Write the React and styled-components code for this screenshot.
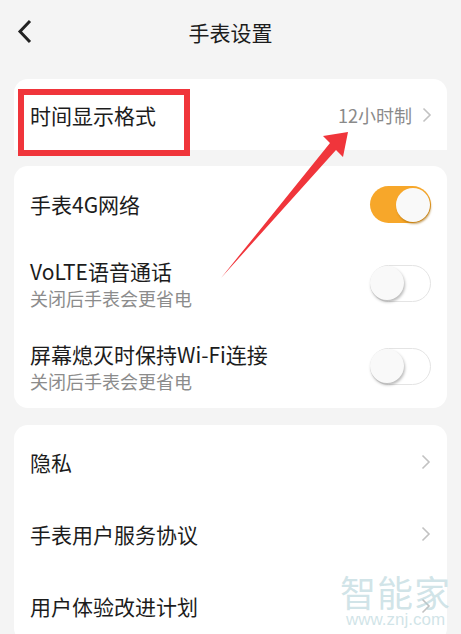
import React from "react";
import styled, { createGlobalStyle } from "styled-components";

const GlobalStyle = createGlobalStyle`
  html, body {
    margin: 0;
    padding: 0;
    background: #f4f4f4;
  }
  body {
    font-family: "Noto Sans CJK SC", "Noto Sans", "Liberation Sans", sans-serif;
    color: #1c1c1c;
  }
`;

const Page = styled.div`
  position: relative;
  width: 461px;
  height: 634px;
  overflow: hidden;
  background: #f4f4f4;
  padding: 0 14px;
  box-sizing: border-box;
  display: flex;
  flex-direction: column;
  & > * {
    flex-shrink: 0;
  }
`;

const Header = styled.div`
  height: 64px;
  display: flex;
  align-items: center;
  justify-content: center;
  position: relative;
  margin-bottom: 15px;
`;

const BackButton = styled.div`
  position: absolute;
  left: 2px;
  top: 19px;
  width: 20px;
  height: 26px;
`;

const Title = styled.h1`
  margin: 0;
  font-size: 21px;
  font-weight: 400;
  color: #1c1c1c;
  line-height: 1;
`;

const Card = styled.div`
  position: relative;
  background: #ffffff;
  border-radius: ${(p) => (p.$flat ? "14px 14px 0 0" : "14px")};
  padding: ${(p) => p.$pad || "0"};
  margin-bottom: ${(p) => p.$gap || "0"};
  display: flex;
  flex-direction: column;
`;

const Row = styled.div`
  height: ${(p) => p.$h}px;
  flex-shrink: 0;
  display: flex;
  align-items: center;
  justify-content: space-between;
  padding: 0 16px;
`;

const Texts = styled.div`
  display: flex;
  flex-direction: column;
  gap: 3px;
`;

const Label = styled.div`
  font-size: 21px;
  line-height: 26px;
  color: #1c1c1c;
`;

const Sub = styled.div`
  font-size: 18px;
  line-height: 22px;
  color: #8c8c8c;
`;

const Right = styled.div`
  display: flex;
  align-items: center;
  gap: 10px;
  margin-right: -1px;
`;

const Value = styled.span`
  font-size: 18px;
  color: #8a8a8a;
`;

const Track = styled.div`
  position: relative;
  width: 61px;
  height: 37px;
  border-radius: 19px;
  box-sizing: border-box;
  background: ${(p) => (p.$on ? "#f7a72a" : "#ffffff")};
  border: ${(p) => (p.$on ? "none" : "1.5px solid #e4e4e4")};
`;

const Knob = styled.div`
  position: absolute;
  top: ${(p) => (p.$on ? "2px" : "0px")};
  ${(p) => (p.$on ? "right: 1px;" : "left: -1px;")}
  width: 34px;
  height: 34px;
  border-radius: 50%;
  background: #f9f9f9;
  box-shadow: ${(p) =>
    p.$on ? "1px 2px 2px rgba(160,100,0,0.55)" : "1px 2px 3px rgba(0,0,0,0.28)"};
`;

const RedBox = styled.div`
  position: absolute;
  left: 4px;
  top: 10px;
  width: 172px;
  height: 67px;
  border: 6px solid #f0353b;
  box-sizing: border-box;
  z-index: 5;
`;

const Overlay = styled.svg`
  position: absolute;
  left: 0;
  top: 0;
  pointer-events: none;
  z-index: 6;
`;

const Watermark = styled.div`
  position: absolute;
  right: 10px;
  bottom: 4px;
  display: flex;
  flex-direction: column;
  align-items: center;
  color: rgba(170, 205, 212, 0.55);
  z-index: 7;
`;

const WmBig = styled.div`
  font-size: 36px;
  line-height: 38px;
  letter-spacing: 1px;
`;

const WmSmall = styled.div`
  font-family: "Liberation Sans", sans-serif;
  font-size: 17px;
  line-height: 20px;
`;

const Chevron = () => (
  <svg width="10" height="16" viewBox="0 0 10 16">
    <path d="M1.5 1.5 L8 8 L1.5 14.5" fill="none" stroke="#c2c2c2" strokeWidth="1.6" />
  </svg>
);

const Toggle = ({ on }) => (
  <Track $on={on}>
    <Knob $on={on} />
  </Track>
);

export default function App() {
  return (
    <>
      <GlobalStyle />
      <Page>
        <Header>
          <BackButton>
            <svg width="20" height="26" viewBox="0 0 20 26">
              <path d="M14 2 L4 12.5 L14 23" fill="none" stroke="#222" strokeWidth="3" />
            </svg>
          </BackButton>
          <Title>手表设置</Title>
        </Header>

        <Card $flat $gap="16px">
          <RedBox />
          <Row $h={71}>
            <Label>时间显示格式</Label>
            <Right>
              <Value>12小时制</Value>
              <Chevron />
            </Right>
          </Row>
        </Card>

        <Card $gap="17px">
          <Row $h={76}>
            <Label>手表4G网络</Label>
            <Toggle on />
          </Row>
          <Row $h={83}>
            <Texts>
              <Label>VoLTE语音通话</Label>
              <Sub>关闭后手表会更省电</Sub>
            </Texts>
            <Toggle />
          </Row>
          <Row $h={83}>
            <Texts>
              <Label>屏幕熄灭时保持Wi-Fi连接</Label>
              <Sub>关闭后手表会更省电</Sub>
            </Texts>
            <Toggle />
          </Row>
        </Card>

        <Card $pad="1px 0 0">
          <Row $h={72}>
            <Label>隐私</Label>
            <Chevron />
          </Row>
          <Row $h={72}>
            <Label>手表用户服务协议</Label>
            <Chevron />
          </Row>
          <Row $h={72}>
            <Label>用户体验改进计划</Label>
            <Chevron />
          </Row>
        </Card>

        <Overlay width="461" height="634" viewBox="0 0 461 634">
          <path
            d="M348 132 L343 157 L336 150 L221 278 L330 143 L323 136 Z"
            fill="#f0353b"
          />
        </Overlay>

        <Watermark>
          <WmBig>智能家</WmBig>
          <WmSmall>www.znj.com</WmSmall>
        </Watermark>
      </Page>
    </>
  );
}
